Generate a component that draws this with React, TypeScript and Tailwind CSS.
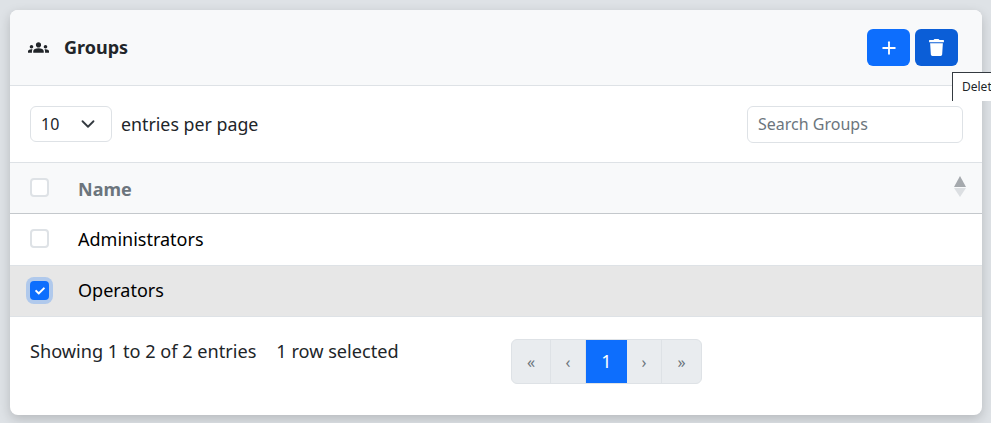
import { FaTrash, FaCheck } from 'react-icons/fa'
import { MdGroups } from 'react-icons/md'
import { Plus, ChevronDown } from 'lucide-react'

function Checkbox({ checked = false }: { checked?: boolean }) {
  if (checked) {
    return (
      <span className="flex h-[19px] w-[19px] items-center justify-center rounded-[4px] bg-[#0d6efd] text-white shadow-[0_0_0_4px_rgba(13,110,253,0.25)]">
        <FaCheck className="h-[10px] w-[10px]" />
      </span>
    )
  }
  return <span className="block h-[19px] w-[19px] rounded-[4px] border-2 border-[#dee2e6] bg-white" />
}

function PageItem({ label, w, active = false }: { label: string; w: string; active?: boolean }) {
  return (
    <span
      className={
        active
          ? `flex h-[43px] items-center justify-center bg-[#0d6efd] text-[18px] text-white ${w}`
          : `flex h-[43px] items-center justify-center border-r border-[#dee2e6] text-[16px] text-[#6c757d] last:border-r-0 ${w}`
      }
    >
      {label}
    </span>
  )
}

export default function App() {
  return (
    <div className="relative h-[423px] w-[991px] overflow-hidden bg-[#dee2e6] p-[10px] font-['Noto_Sans',sans-serif] text-[#212529]">
      <div className="h-[405px] w-[972px] overflow-hidden rounded-[8px] bg-white shadow-[0_4px_12px_rgba(0,0,0,0.18)]">
        <div className="flex h-[76px] items-center justify-between border-b border-[#dee2e6] bg-[#f8f9fa] pl-[18px] pr-[24px]">
          <div className="flex items-center">
            <MdGroups className="h-[21px] w-[21px] text-[#212529]" />
            <span className="mb-[2px] ml-[15px] text-[18px] font-bold leading-none">Groups</span>
          </div>
          <div className="flex gap-[5px]">
            <button className="flex h-[37px] w-[43px] items-center justify-center rounded-[6px] bg-[#0d6efd] text-white">
              <Plus className="h-[20px] w-[20px]" strokeWidth={2.2} />
            </button>
            <button className="flex h-[37px] w-[43px] items-center justify-center rounded-[6px] bg-[#0b5ed7] text-white">
              <FaTrash className="h-[17px] w-[15px]" />
            </button>
          </div>
        </div>

        <div className="flex h-[76px] items-center justify-between pl-[20px] pr-[19px]">
          <div className="flex items-center">
            <div className="flex h-[36px] w-[82px] items-center justify-between rounded-[6px] border border-[#dee2e6] pl-[10px] pr-[12px] text-[16px]">
              <span>10</span>
              <ChevronDown className="h-[22px] w-[22px] text-[#343a40]" strokeWidth={2} />
            </div>
            <span className="ml-[9px] text-[17.8px]">entries per page</span>
          </div>
          <input
            placeholder="Search Groups"
            className="h-[37px] w-[216px] rounded-[6px] border border-[#dee2e6] px-[10px] text-[16px] outline-none placeholder:text-[#6c757d]"
          />
        </div>

        <div className="flex h-[52px] items-center border-y border-t-[#dee2e6] border-b-[#c4c8cc] bg-[#f8f9fa]">
          <div className="flex w-[59px] justify-center pb-[1px]">
            <Checkbox />
          </div>
          <span className="ml-[9px] flex-1 pt-[3px] text-[18px] font-bold text-[#6c757d]">Name</span>
          <div className="mb-[3px] mr-[16px] flex flex-col items-center gap-[1px]">
            <span className="h-0 w-0 border-x-[6px] border-b-[11px] border-x-transparent border-b-[#a5a9ad]" />
            <span className="h-0 w-0 border-x-[6px] border-t-[9px] border-x-transparent border-t-[#dcdfe2]" />
          </div>
        </div>

        <div className="flex h-[52px] items-center border-b border-[#dee2e6]">
          <div className="flex w-[59px] justify-center pb-[3px]">
            <Checkbox />
          </div>
          <span className="ml-[9px] text-[18px] text-black">Administrators</span>
        </div>
        <div className="flex h-[51px] items-center border-b border-[#dee2e6] bg-[#e7e7e7]">
          <div className="flex w-[59px] justify-center pb-[1px]">
            <Checkbox checked />
          </div>
          <span className="mb-[2px] ml-[9px] text-[18px] text-black">Operators</span>
        </div>

        <div className="flex items-start pl-[20px] pt-[22px]">
          <div className="w-[481px] text-[18.15px] leading-[25px]">
            Showing 1 to 2 of 2 entries<span className="ml-[20px]">1 row selected</span>
          </div>
          <div className="flex overflow-hidden rounded-[6px] border border-[#dee2e6] bg-[#e9ecef]">
            <PageItem label="«" w="w-[39px]" />
            <PageItem label="‹" w="w-[35px]" />
            <PageItem label="1" w="w-[41px]" active />
            <PageItem label="›" w="w-[35px]" />
            <PageItem label="»" w="w-[39px]" />
          </div>
        </div>
      </div>

      <div className="absolute left-[952px] top-[72px] h-[29px] w-[60px] border-l border-t border-[#343a40] bg-white pl-[9px] pt-[6px] text-[12px] leading-[16px] text-[#212529]">
        Delete
      </div>
    </div>
  )
}
